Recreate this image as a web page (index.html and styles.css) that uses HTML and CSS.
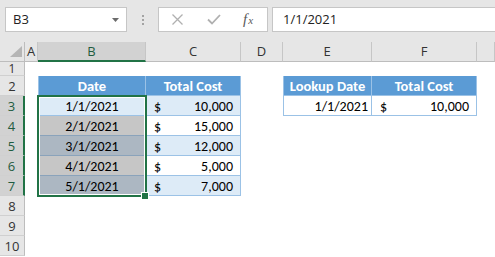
FILE: index.html
```html
<!DOCTYPE html>
<html>
<head>
<meta charset="utf-8">
<link rel="stylesheet" href="styles.css">
</head>
<body>
<div class="toolbar">
  <div class="namebox">
    <span>B3</span>
    <svg class="dd" width="7" height="4" viewBox="0 0 7 4"><polygon points="0,0 7,0 3.5,4" fill="#6b6b6b"/></svg>
  </div>
  <div class="grip"><i></i><i></i><i></i></div>
  <div class="fbtns">
    <svg class="ic-x" width="11" height="11" viewBox="0 0 11 11"><path d="M0.5 0.5 L10.5 10.5 M10.5 0.5 L0.5 10.5" stroke="#b0b0b0" stroke-width="1.3" fill="none"/></svg>
    <svg class="ic-ok" width="14" height="11" viewBox="0 0 14 11"><path d="M1 5.5 L5 9.5 L13 1" stroke="#b0b0b0" stroke-width="1.8" fill="none"/></svg>
    <span class="fx"><i>f</i><span class="fxx">x</span></span>
  </div>
  <div class="finput">1/1/2021</div>
</div>
<div class="sheet">
  <div class="corner"><svg width="25" height="19" viewBox="0 0 25 19"><polygon points="10,15 22,15 22,4" fill="#b5b5b5"/></svg></div>
  <div class="ch">A</div>
  <div class="ch sel">B</div>
  <div class="ch">C</div>
  <div class="ch">D</div>
  <div class="ch">E</div>
  <div class="ch">F</div>
  <div class="ch"></div>

  <div class="rh short">1</div>
  <div class="blank span7"></div>

  <div class="rh">2</div>
  <div class="blank"></div>
  <div class="th first">Date</div>
  <div class="th">Total Cost</div>
  <div class="blank"></div>
  <div class="th first">Lookup Date</div>
  <div class="th">Total Cost</div>
  <div class="blank"></div>

  <div class="rh sel">3</div>
  <div class="blank"></div>
  <div class="td first alt center">1/1/2021</div>
  <div class="td alt money"><span>$</span><span>10,000</span></div>
  <div class="blank"></div>
  <div class="td first right">1/1/2021</div>
  <div class="td money"><span>$</span><span>10,000</span></div>
  <div class="blank"></div>

  <div class="rh sel">4</div>
  <div class="blank"></div>
  <div class="td first center selw">2/1/2021</div>
  <div class="td money"><span>$</span><span>15,000</span></div>
  <div class="blank span4"></div>

  <div class="rh sel">5</div>
  <div class="blank"></div>
  <div class="td first center selb">3/1/2021</div>
  <div class="td alt money"><span>$</span><span>12,000</span></div>
  <div class="blank span4"></div>

  <div class="rh sel">6</div>
  <div class="blank"></div>
  <div class="td first center selw">4/1/2021</div>
  <div class="td money"><span>$</span><span>5,000</span></div>
  <div class="blank span4"></div>

  <div class="rh sel">7</div>
  <div class="blank"></div>
  <div class="td first center selb">5/1/2021</div>
  <div class="td alt money"><span>$</span><span>7,000</span></div>
  <div class="blank span4"></div>

  <div class="rh">8</div>
  <div class="blank span7"></div>
  <div class="rh">9</div>
  <div class="blank span7"></div>
  <div class="rh">10</div>
  <div class="blank span7"></div>

  <div class="selection"></div>
  <div class="handle"></div>
</div>
</body>
</html>
```

FILE: styles.css
```css
* {
  box-sizing: border-box;
  margin: 0;
  padding: 0;
}

body {
  margin: 0;
  width: 495px;
  height: 257px;
  overflow: hidden;
  background: #ffffff;
  font-family: Calibri, Carlito, Lato, sans-serif;
  font-size: 14px;
  color: #000;
}

/* ---------- formula bar ---------- */
.toolbar {
  height: 42px;
  background: #e6e6e6;
  display: flex;
  align-items: flex-start;
  padding: 7px 0 0 5px;
  font-family: "Open Sans", "Liberation Sans", sans-serif;
  font-size: 13px;
  color: #222;
}

.namebox {
  width: 122px;
  height: 25px;
  background: #fff;
  border: 1px solid #c6c6c6;
  display: flex;
  align-items: center;
  justify-content: space-between;
  padding: 0 7px 0 7px;
  line-height: 23px;
}

.grip {
  width: 31px;
  height: 25px;
  display: flex;
  flex-direction: column;
  align-items: center;
  justify-content: center;
  gap: 2px;
}

.grip i {
  display: block;
  width: 2px;
  height: 2px;
  background: #a3a3a3;
}

.fbtns {
  width: 110px;
  height: 25px;
  background: #fff;
  border: 1px solid #c6c6c6;
  display: flex;
  align-items: center;
  padding-left: 13px;
}

.ic-ok {
  margin-left: 24px;
}

.fx {
  margin-left: 22px;
  font-family: "Liberation Serif", serif;
  color: #5a5a5a;
  font-size: 15px;
  line-height: 1;
  display: flex;
  align-items: baseline;
}

.fx i {
  font-style: italic;
}

.fxx {
  font-style: italic;
  font-size: 11px;
  margin-left: 1px;
}

.finput {
  flex: 1;
  height: 25px;
  margin-left: 4px;
  margin-right: -2px;
  background: #fff;
  border: 1px solid #c6c6c6;
  padding-left: 10px;
  line-height: 23px;
  font-size: 13px;
  color: #222;
}

/* ---------- sheet ---------- */
.sheet {
  position: relative;
  display: grid;
  grid-template-columns: 25px 13px 108px 95px 42px 89px 105px 1fr;
  grid-template-rows: 20px 14px repeat(9, 20px);
}

.corner {
  background: #e6e6e6;
  border-right: 1px solid #bdbdbd;
  border-bottom: 1px solid #bdbdbd;
}

.corner svg {
  display: block;
}

.ch {
  background: #e6e6e6;
  border-right: 1px solid #c6c6c6;
  border-bottom: 1px solid #bdbdbd;
  font-family: "Open Sans", "Liberation Sans", sans-serif;
  font-size: 13px;
  color: #333;
  text-align: center;
  line-height: 19px;
}

.ch.sel {
  background: #d2d2d2;
  border-bottom: 2px solid #217346;
  color: #1f5c40;
}

.rh {
  background: #e6e6e6;
  border-right: 1px solid #bdbdbd;
  border-bottom: 1px solid #d0d0d0;
  font-family: "Open Sans", "Liberation Sans", sans-serif;
  font-size: 13px;
  color: #333;
  text-align: center;
  line-height: 21px;
  overflow: hidden;
}

.rh.short {
  font-size: 12px;
  line-height: 13px;
  overflow: visible;
}

.rh.sel {
  background: #d2d2d2;
  border-right: 2px solid #217346;
  color: #1f5c40;
}

.blank {
  background: #fff;
}

.span7 {
  grid-column: span 7;
}

.span4 {
  grid-column: span 4;
}

.th {
  background: #5b9bd5;
  color: #fff;
  font-weight: bold;
  font-size: 14.5px;
  text-align: center;
  line-height: 20px;
  border-right: 1px solid #9bc2e6;
  border-bottom: 1px solid #9bc2e6;
}

.td {
  background: #fff;
  line-height: 21px;
  border-right: 1px solid #9bc2e6;
  border-bottom: 1px solid #9bc2e6;
  overflow: hidden;
}

.first {
  border-left: 1px solid #9bc2e6;
}

.alt {
  background: #ddebf7;
}

.center {
  text-align: center;
}

.right {
  text-align: right;
  padding-right: 3px;
}

.money {
  display: flex;
  justify-content: space-between;
  padding: 0 7px 0 8px;
}

.selw {
  background: #c6c6c6;
  border-bottom-color: #8aa3bb;
}

.selb {
  background: #acb7c2;
  border-bottom-color: #8aa3bb;
}

.selection {
  position: absolute;
  left: 37px;
  top: 53px;
  width: 110px;
  height: 102px;
  border: 2px solid #217346;
  box-shadow: inset 0 0 0 1px #fff;
  pointer-events: none;
}

.handle {
  position: absolute;
  left: 142px;
  top: 151px;
  width: 6px;
  height: 6px;
  background: #217346;
  box-shadow: 0 0 0 1px #fff;
}
```
